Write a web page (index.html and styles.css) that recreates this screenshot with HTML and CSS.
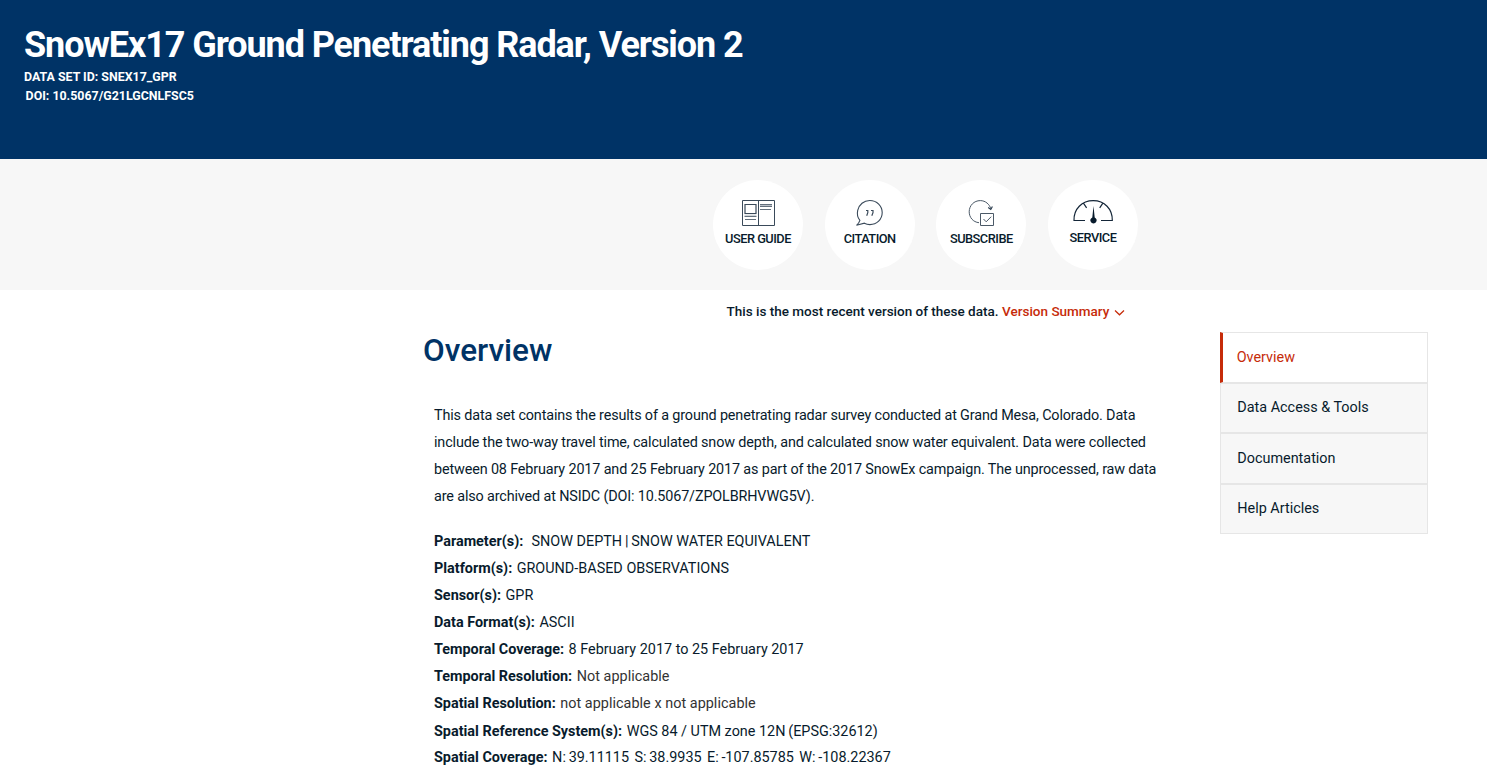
FILE: index.html
```html
<!DOCTYPE html>
<html lang="en">
<head>
<meta charset="utf-8">
<title>SnowEx17 Ground Penetrating Radar, Version 2</title>
<link rel="stylesheet" href="styles.css">
</head>
<body>
<header class="hero">
  <h1 class="hero-title">SnowEx17 Ground Penetrating Radar, Version 2</h1>
  <div class="hero-id">DATA SET ID: SNEX17_GPR</div>
  <div class="hero-doi">DOI: 10.5067/G21LGCNLFSC5</div>
</header>
<nav class="tools">
  <a class="tool">
    <svg class="tool-icon" width="46" height="30" viewBox="0 0 46 30" fill="none" stroke="#3a4a5a">
      <path d="M7.500 2.500h32v25H7.500zM23.500 2.500v25"/><path d="M10 6.500h11v9H10z" stroke-width="1.200"/>
      <path d="M9.500 18.500h12M10 21.500h11M25 6.500h12M25 8.500h12M25 11.500h11" stroke-width=".8"/>
      <path d="M9.500 17.200h12M25 7.500h12" stroke="#a7afb7" stroke-width=".8"/>
    </svg>
    <span class="tool-label">USER GUIDE</span>
  </a>
  <a class="tool">
    <svg class="tool-icon" width="46" height="30" viewBox="0 0 46 30" fill="none" stroke="#3a4a5a" stroke-width="1.1">
      <path d="M12.900 22.300C10.500 19.500 9.900 16 10.700 12.300C12 6.500 16.900 2.500 22.700 2.500C30 2.500 35.200 8 35.200 14.600C35.200 21.500 29.800 26.600 22.900 26.600C20.800 26.600 19 26.100 17.400 25.200L9.500 27.300C11.500 25.400 12.400 24 12.900 22.300Z"/>
      <path d="M19 12.500h1.800v2.200l-1.100 3M24 12.500h2v2.200l-1.200 3" stroke-width="1.200"/>
    </svg>
    <span class="tool-label">CITATION</span>
  </a>
  <a class="tool">
    <svg class="tool-icon" width="46" height="30" viewBox="0 0 46 30" fill="none" stroke="#4b5967" stroke-width="1">
      <path d="M21 24.700C15 24.100 11.200 19.300 11.200 13.800C11.200 7.500 16 2.600 22.300 2.600C27.500 2.600 31.500 6.300 32.900 10.800"/>
      <path d="M30.200 9.500l2.600 1.900 1.600-3" stroke="#26384a" stroke-width="1.100"/>
      <path d="M22.500 15.500h13v12h-13zM25.500 21l2.700 2.800 5-5.100"/>
    </svg>
    <span class="tool-label">SUBSCRIBE</span>
  </a>
  <a class="tool">
    <svg class="tool-icon" width="46" height="30" viewBox="0 0 46 30" fill="none" stroke="#142638" stroke-width="1.200">
      <path d="M15 22.500H4C3.600 11 12 2.600 23.200 2.600S42.600 11 42.300 22.500H31M13.600 5.400l3 4.400M32.700 5.400l-3 4.400"/>
      <path d="M23.500 8l1.200 11.400c2.100 1.100 2.400 3 1.500 4.400c-1.200 2.100-4.200 2.100-5.400 0c-.9-1.400-.6-3.300 1.500-4.400z" fill="#081b2c" stroke="none"/>
    </svg>
    <span class="tool-label service">SERVICE</span>
  </a>
</nav>
<div class="version">
  <span class="version-text">This is the most recent version of these data.</span>
  <a class="version-link">Version Summary</a>
  <svg class="chevron" width="11" height="8" viewBox="0 0 11 8" fill="none" stroke="#c62b09" stroke-width="1.200"><path d="M1 1.500l4.500 4.300L10 1.500"/></svg>
</div>
<main class="layout">
  <article class="article">
    <h2 class="heading">Overview</h2>
    <p class="summary">
      <span class="line">This data set contains the results of a ground penetrating radar survey conducted at Grand Mesa, Colorado. Data</span>
      <span class="line">include the two-way travel time, calculated snow depth, and calculated snow water equivalent. Data were collected</span>
      <span class="line">between 08 February 2017 and 25 February 2017 as part of the 2017 SnowEx campaign. The unprocessed, raw data</span>
      <span class="line">are also archived at NSIDC (DOI: 10.5067/ZPOLBRHVWG5V).</span>
    </p>
    <dl class="facts">
      <div class="fact parameters"><dt>Parameter(s):</dt><dd>SNOW DEPTH<span class="tight"> | </span>SNOW WATER EQUIVALENT</dd></div>
      <div class="fact"><dt>Platform(s):</dt><dd>GROUND-BASED OBSERVATIONS</dd></div>
      <div class="fact"><dt>Sensor(s):</dt><dd>GPR</dd></div>
      <div class="fact"><dt>Data Format(s):</dt><dd>ASCII</dd></div>
      <div class="fact"><dt>Temporal Coverage:</dt><dd>8 February 2017 to 25 February 2017</dd></div>
      <div class="fact muted"><dt>Temporal Resolution:</dt><dd>Not applicable</dd></div>
      <div class="fact muted"><dt>Spatial Resolution:</dt><dd>not applicable x not applicable</dd></div>
      <div class="fact reference"><dt>Spatial Reference System(s):</dt><dd>WGS 84 / UTM zone 12N<span class="tight"> </span>(EPSG:32612)</dd></div>
      <div class="fact"><dt>Spatial Coverage:</dt><dd class="bounds"><span>N: 39.11115</span><span>S: 38.9935</span><span>E: -107.85785</span><span>W: -108.22367</span></dd></div>
    </dl>
  </article>
  <aside class="menu">
    <a class="menu-item active">Overview</a>
    <a class="menu-item">Data Access &amp; Tools</a>
    <a class="menu-item low">Documentation</a>
    <a class="menu-item">Help Articles</a>
  </aside>
</main>
</body>
</html>
```
FILE: styles.css
```css
* { box-sizing: border-box; }
html, body { margin: 0; height: 777px; overflow: hidden; }
body { font-family: Roboto, "Liberation Sans", sans-serif; font-size: 14.4px; color: #081b2c; background: #fff; }
h1, h2, p, dl, dd { margin: 0; }

.hero { height: 159px; padding: 25px 24px 0; background: #036; color: #fff; font-weight: 700; font-size: 12.4px; line-height: 19px; white-space: nowrap; }
.hero-title { font-size: 36px; line-height: 40px; font-weight: 700; letter-spacing: -1.08px; margin-bottom: 2px; }
.hero-doi { padding-left: 1.6px; }

.tools { display: flex; gap: 21.67px; height: 131px; padding: 21px 0 0 713px; background: #f7f7f7; }
.tool { display: flex; flex-direction: column; align-items: center; width: 90px; height: 90px; padding-top: 18px; border-radius: 50%; background: #fff; }
.tool-icon { display: block; }
.tool-label { margin-top: 3px; font-size: 12.8px; line-height: 16px; font-weight: 500; letter-spacing: -0.5px; white-space: nowrap; }
.service { margin-top: 2px; }

.version { display: flex; align-items: center; height: 42px; padding-left: 726.5px; font-size: 13.5px; font-weight: 500; white-space: nowrap; }
.version-link { margin-left: 3.5px; color: #c62b09; }
.chevron { margin: 3px 0 0 4.6px; }

.layout { display: flex; }
.article { flex: none; width: 1220px; padding-left: 423px; }
.heading { height: 70px; line-height: 38px; font-size: 31.5px; font-weight: 500; color: #036; }
.summary { padding-left: 11px; margin-bottom: 18px; line-height: 27px; letter-spacing: -0.142px; white-space: nowrap; }
.line { display: block; }
.facts { padding-left: 11px; line-height: 27px; white-space: nowrap; }
.fact { display: flex; }
.fact dt { font-weight: 700; margin-right: 4.5px; }
.parameters dt { margin-right: 8.2px; }
.muted dd { color: #333; letter-spacing: 0.04px; }
.reference { padding-top: 1px; margin-bottom: -1px; }
.tight { word-spacing: -0.8px; }
.bounds { display: flex; gap: 5.4px; word-spacing: -0.8px; }

.menu { flex: none; width: 208px; }
.menu-item { display: block; height: 50.5px; padding: 0 16px 0 16.3px; border: 1px solid #e6e6e6; background: #f7f7f7; line-height: 48px; white-space: nowrap; }
.menu-item.active { border-left: 3px solid #c62b09; padding-left: 13.7px; line-height: 50px; background: #fff; color: #c62b09; }
.menu-item.low { line-height: 49px; }
```
